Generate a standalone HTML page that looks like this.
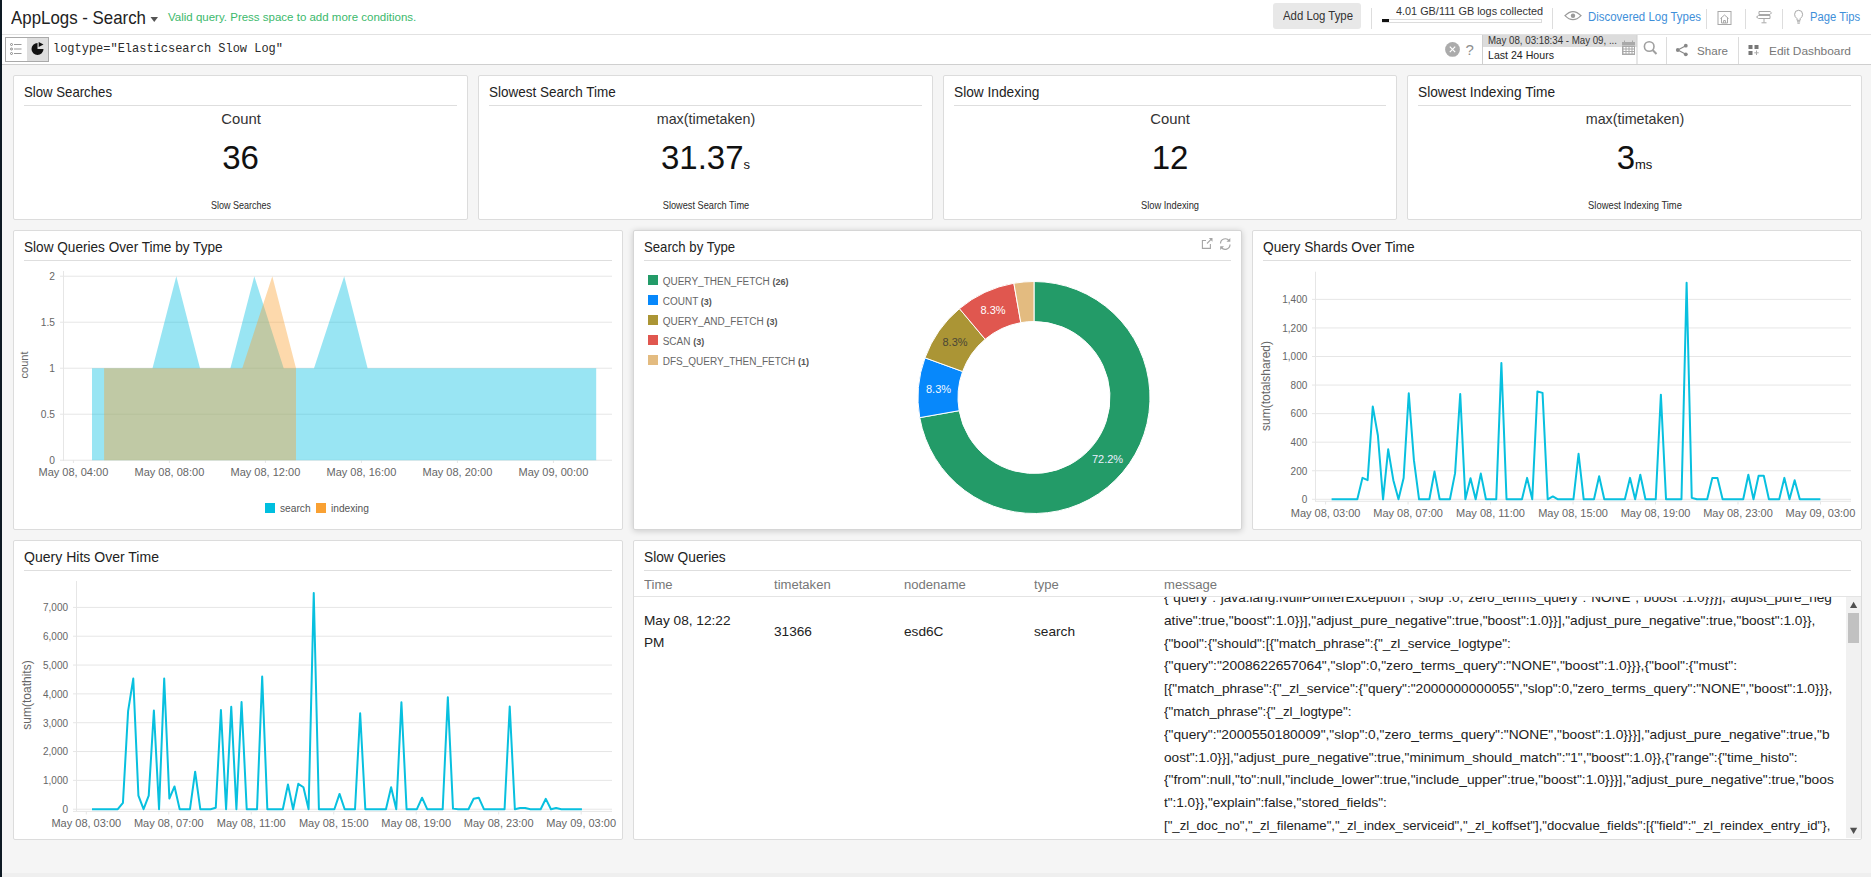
<!DOCTYPE html>
<html><head><meta charset="utf-8"><title>AppLogs - Search</title>
<style>
html,body{margin:0;padding:0;}
body{width:1871px;height:877px;overflow:hidden;background:#f5f5f5;position:relative;font-family:"Liberation Sans",sans-serif;}
.t{position:absolute;white-space:nowrap;}
.b{position:absolute;box-sizing:border-box;}
svg{position:absolute;left:0;top:0;}
</style></head><body>

<div class="b" style="left:0px;top:0px;width:1871px;height:35px;background:#fff;border-bottom:1px solid #e2e2e2;"></div>
<div class="b" style="left:0px;top:35px;width:1871px;height:30px;background:#fff;border-bottom:1px solid #cfcfcf;"></div>
<div class="b" style="left:0px;top:0px;width:2px;height:877px;background:#0e1a24;"></div>
<div class="b" style="left:2px;top:873px;width:1869px;height:4px;background:#efefef;"></div>
<div class="t sc" style="left:11.00px;top:8.59px;font-size:18.2px;line-height:18.2px;color:#222;font-weight:400;transform-origin:0 0;transform:scaleX(0.9272);">AppLogs - Search</div>
<svg width="1871" height="65" style="pointer-events:none"><path d="M150.5 17 L158 17 L154.25 22 Z" fill="#555"/></svg>
<div class="t sc" style="left:168.00px;top:12.27px;font-size:11.5px;line-height:11.5px;color:#3cb96c;font-weight:400;transform-origin:0 0;">Valid query. Press space to add more conditions.</div>
<div class="b" style="left:1273px;top:3px;width:88px;height:26px;background:#e8e8e8;border-radius:3px;"></div>
<div class="t sc" style="left:1283.00px;top:10.53px;font-size:11.9px;line-height:11.9px;color:#333;font-weight:400;transform-origin:0 0;transform:scaleX(0.9567);">Add Log Type</div>
<div class="b" style="left:1371px;top:8px;width:1px;height:21px;background:#ddd;"></div>
<div class="t sc" style="left:1396.00px;top:6.03px;font-size:11.3px;line-height:11.3px;color:#333;font-weight:400;transform-origin:0 0;transform:scaleX(0.9620);">4.01 GB/111 GB logs collected</div>
<div class="b" style="left:1382px;top:19px;width:160px;height:4px;border:1px solid #dcdcdc;background:#fff;"></div>
<div class="b" style="left:1382px;top:19px;width:7px;height:3px;background:#111;"></div>
<div class="b" style="left:1552px;top:8px;width:1px;height:21px;background:#ddd;"></div>
<div class="t sc" style="left:1588.30px;top:10.89px;font-size:12.3px;line-height:12.3px;color:#3f8fd9;font-weight:400;transform-origin:0 0;transform:scaleX(0.9304);">Discovered Log Types</div>
<div class="b" style="left:1706px;top:9px;width:1px;height:20px;background:#ddd;"></div>
<div class="b" style="left:1745px;top:9px;width:1px;height:20px;background:#ddd;"></div>
<div class="b" style="left:1782px;top:9px;width:1px;height:20px;background:#ddd;"></div>
<div class="t sc" style="left:1809.70px;top:10.89px;font-size:12.3px;line-height:12.3px;color:#3f8fd9;font-weight:400;transform-origin:0 0;transform:scaleX(0.9143);">Page Tips</div>
<svg width="1871" height="65" style="pointer-events:none">
<g fill="none" stroke="#9a9a9a" stroke-width="1.3">
  <path d="M1565 15.6 Q1573 7.5 1581 15.6 Q1573 23.7 1565 15.6 Z"/>
</g>
<circle cx="1573" cy="15.8" r="2.2" fill="#9a9a9a"/>
<g fill="none" stroke="#a8a8a8" stroke-width="1">
  <rect x="1718" y="11.5" width="13" height="13"/>
  <path d="M1720.5 18.5 L1724.5 15 L1728.5 18.5 M1721.5 17.8 V23 H1727.5 V17.8 M1723.6 23 V20.5 H1725.4 V23"/>
  <path d="M1759 11.5 H1770 L1771.5 12.8 L1770 14.5 H1759 Z M1770 15.5 H1758.5 L1756.5 17 L1758.5 18.5 H1770 Z M1764 18.5 V22.5 M1761.5 22.8 H1766.5"/>
  <path d="M1797 20.3 V18.6 Q1794.6 17 1794.6 14.3 A4 4 0 0 1 1802.6 14.3 Q1802.6 17 1800.2 18.6 V20.3 Z" />
  <path d="M1797 21.8 H1800.2 M1797.4 23.2 H1799.8" />
</g>
<!-- row 2 -->
<rect x="5.5" y="37.5" width="43" height="24" fill="#fff" stroke="#a9a9a9" stroke-width="1"/>
<rect x="27" y="38" width="21" height="23" fill="#dedede"/>
<g stroke="#888" stroke-width="1" fill="none">
  <circle cx="11.5" cy="44.5" r="1"/><circle cx="11.5" cy="49" r="1"/><circle cx="11.5" cy="53.5" r="1"/>
</g>
<g stroke="#999" stroke-width="1.2"><path d="M14 44.5 H21.5 M14 49 H21.5 M14 53.5 H21.5"/></g>
<path d="M37.5 43 A6 6 0 1 0 43.5 49 H37.5 Z" fill="#111"/>
<path d="M38.7 42 L43.5 44.5 L38.7 47 Z" fill="#111"/>
<circle cx="1452.5" cy="49.4" r="7.4" fill="#ababab"/>
<path d="M1449.8 46.7 L1455.2 52.1 M1455.2 46.7 L1449.8 52.1" stroke="#fff" stroke-width="1.2"/>
<rect x="1482" y="35" width="155" height="12" fill="#dcdcdc"/>
<rect x="1482" y="35" width="1" height="29" fill="#cfcfcf"/>
<rect x="1636.5" y="35" width="1" height="29" fill="#cfcfcf"/>
<g fill="#a9a9a9">
  <rect x="1622" y="42" width="13" height="3"/>
  <rect x="1624" y="40.5" width="1" height="2"/><rect x="1632" y="40.5" width="1" height="2"/>
  <rect x="1622" y="45.5" width="13" height="9.5"/>
</g>
<g fill="#fff">
  <rect x="1623.5" y="47" width="2" height="1.5"/><rect x="1626.5" y="47" width="2" height="1.5"/><rect x="1629.5" y="47" width="2" height="1.5"/><rect x="1632.5" y="47" width="1.5" height="1.5"/>
  <rect x="1623.5" y="49.5" width="2" height="1.5"/><rect x="1626.5" y="49.5" width="2" height="1.5"/><rect x="1629.5" y="49.5" width="2" height="1.5"/><rect x="1632.5" y="49.5" width="1.5" height="1.5"/>
  <rect x="1623.5" y="52" width="2" height="1.5"/><rect x="1626.5" y="52" width="2" height="1.5"/><rect x="1629.5" y="52" width="2" height="1.5"/><rect x="1632.5" y="52" width="1.5" height="1.5"/>
</g>
<circle cx="1649.2" cy="46.5" r="4.8" fill="none" stroke="#a0a0a0" stroke-width="1.6"/>
<path d="M1652.6 50 L1656.5 54" stroke="#a0a0a0" stroke-width="2"/>
<rect x="1666" y="37" width="1" height="27" fill="#dcdcdc"/>
<rect x="1738" y="37" width="1" height="27" fill="#dcdcdc"/>
<g fill="#888"><circle cx="1677.8" cy="50" r="1.9"/><circle cx="1685.8" cy="45.7" r="1.9"/><circle cx="1685.8" cy="54.3" r="1.9"/></g>
<path d="M1677.8 50 L1685.8 45.7 M1677.8 50 L1685.8 54.3" stroke="#888" stroke-width="1.2"/>
<g fill="#777"><rect x="1748.5" y="45" width="4" height="4"/><rect x="1754.5" y="45" width="4" height="4"/><rect x="1748.5" y="51" width="4" height="4"/></g>
<path d="M1756.5 50.5 V55 M1754.3 52.8 H1758.7" stroke="#aaa" stroke-width="1"/>
</svg>
<div class="t sc" style="left:52.50px;top:42.58px;font-size:12.9px;line-height:12.9px;color:#2a2a2a;font-weight:400;transform-origin:0 0;transform:scaleX(0.9291);font-family:'Liberation Mono',monospace;">logtype="Elasticsearch Slow Log"</div>
<div class="t sc" style="left:1465.50px;top:41.80px;font-size:15px;line-height:15px;color:#8e8e8e;font-weight:400;transform-origin:0 0;">?</div>
<div class="t sc" style="left:1488.10px;top:36.44px;font-size:10px;line-height:10px;color:#333;font-weight:400;transform-origin:0 0;transform:scaleX(0.9710);">May 08, 03:18:34 - May 09, ...</div>
<div class="t sc" style="left:1488.10px;top:49.60px;font-size:11.1px;line-height:11.1px;color:#222;font-weight:400;transform-origin:0 0;transform:scaleX(0.9554);">Last 24 Hours</div>
<div class="t sc" style="left:1697.00px;top:45.20px;font-size:11.7px;line-height:11.7px;color:#777;font-weight:400;transform-origin:0 0;transform:scaleX(0.9935);">Share</div>
<div class="t sc" style="left:1769.00px;top:45.20px;font-size:11.7px;line-height:11.7px;color:#777;font-weight:400;transform-origin:0 0;transform:scaleX(1.0176);">Edit Dashboard</div>
<div class="b" style="left:13px;top:75px;width:455px;height:145px;background:#fff;border:1px solid #dcdcdc;border-radius:2px;"></div>
<div class="t sc" style="left:24.00px;top:85.01px;font-size:14.4px;line-height:14.4px;color:#222;font-weight:400;transform-origin:0 0;transform:scaleX(0.9167);">Slow Searches</div>
<div class="b" style="left:24px;top:105px;width:433px;height:1px;background:#dedede;"></div>
<div class="t sc" style="left:240.50px;top:112.08px;font-size:14.2px;line-height:14.2px;color:#333;font-weight:400;transform-origin:0 0;transform:scaleX(1.0460) translateX(-50%);">Count</div>
<div class="t sc" style="left:240.50px;top:141.07px;font-size:33px;line-height:33px;color:#111;font-weight:400;transform-origin:0 0;transform:translateX(-50%);">36</div>
<div class="t sc" style="left:240.50px;top:201.38px;font-size:10.3px;line-height:10.3px;color:#2a2a2a;font-weight:400;transform-origin:0 0;transform:scaleX(0.8735) translateX(-50%);">Slow Searches</div>
<div class="b" style="left:478px;top:75px;width:455px;height:145px;background:#fff;border:1px solid #dcdcdc;border-radius:2px;"></div>
<div class="t sc" style="left:489.00px;top:85.01px;font-size:14.4px;line-height:14.4px;color:#222;font-weight:400;transform-origin:0 0;transform:scaleX(0.9373);">Slowest Search Time</div>
<div class="b" style="left:489px;top:105px;width:433px;height:1px;background:#dedede;"></div>
<div class="t sc" style="left:705.50px;top:112.08px;font-size:14.2px;line-height:14.2px;color:#333;font-weight:400;transform-origin:0 0;transform:scaleX(1.0075) translateX(-50%);">max(timetaken)</div>
<div class="t" style="left:705.50px;top:141.07px;font-size:33px;line-height:33px;color:#111;transform:translateX(-50%);">31.37<span style="font-size:13px;">s</span></div>
<div class="t sc" style="left:705.50px;top:201.38px;font-size:10.3px;line-height:10.3px;color:#2a2a2a;font-weight:400;transform-origin:0 0;transform:scaleX(0.8933) translateX(-50%);">Slowest Search Time</div>
<div class="b" style="left:943px;top:75px;width:454px;height:145px;background:#fff;border:1px solid #dcdcdc;border-radius:2px;"></div>
<div class="t sc" style="left:954.00px;top:85.01px;font-size:14.4px;line-height:14.4px;color:#222;font-weight:400;transform-origin:0 0;transform:scaleX(0.9530);">Slow Indexing</div>
<div class="b" style="left:954px;top:105px;width:432px;height:1px;background:#dedede;"></div>
<div class="t sc" style="left:1170.00px;top:112.08px;font-size:14.2px;line-height:14.2px;color:#333;font-weight:400;transform-origin:0 0;transform:scaleX(1.0460) translateX(-50%);">Count</div>
<div class="t sc" style="left:1170.00px;top:141.07px;font-size:33px;line-height:33px;color:#111;font-weight:400;transform-origin:0 0;transform:translateX(-50%);">12</div>
<div class="t sc" style="left:1170.00px;top:201.38px;font-size:10.3px;line-height:10.3px;color:#2a2a2a;font-weight:400;transform-origin:0 0;transform:scaleX(0.9047) translateX(-50%);">Slow Indexing</div>
<div class="b" style="left:1407px;top:75px;width:455px;height:145px;background:#fff;border:1px solid #dcdcdc;border-radius:2px;"></div>
<div class="t sc" style="left:1418.00px;top:85.01px;font-size:14.4px;line-height:14.4px;color:#222;font-weight:400;transform-origin:0 0;transform:scaleX(0.9522);">Slowest Indexing Time</div>
<div class="b" style="left:1418px;top:105px;width:433px;height:1px;background:#dedede;"></div>
<div class="t sc" style="left:1634.50px;top:112.08px;font-size:14.2px;line-height:14.2px;color:#333;font-weight:400;transform-origin:0 0;transform:scaleX(1.0075) translateX(-50%);">max(timetaken)</div>
<div class="t" style="left:1634.50px;top:141.07px;font-size:33px;line-height:33px;color:#111;transform:translateX(-50%);">3<span style="font-size:13px;">ms</span></div>
<div class="t sc" style="left:1634.50px;top:201.38px;font-size:10.3px;line-height:10.3px;color:#2a2a2a;font-weight:400;transform-origin:0 0;transform:scaleX(0.9104) translateX(-50%);">Slowest Indexing Time</div>
<div class="b" style="left:13px;top:230px;width:610px;height:300px;background:#fff;border:1px solid #dcdcdc;border-radius:2px;"></div>
<div class="b" style="left:633px;top:230px;width:609px;height:300px;background:#fff;border:1px solid #d6d6d6;border-radius:2px;box-shadow:0 1px 6px rgba(0,0,0,0.18);"></div>
<div class="b" style="left:1252px;top:230px;width:610px;height:300px;background:#fff;border:1px solid #dcdcdc;border-radius:2px;"></div>
<div class="b" style="left:13px;top:540px;width:610px;height:300px;background:#fff;border:1px solid #dcdcdc;border-radius:2px;"></div>
<div class="b" style="left:633px;top:540px;width:1229px;height:300px;background:#fff;border:1px solid #dcdcdc;border-radius:2px;"></div>
<div class="t sc" style="left:24.00px;top:240.01px;font-size:14.4px;line-height:14.4px;color:#222;font-weight:400;transform-origin:0 0;transform:scaleX(0.9454);">Slow Queries Over Time by Type</div>
<div class="b" style="left:24px;top:260px;width:588px;height:1px;background:#dedede;"></div>
<div class="t sc" style="left:644.00px;top:239.81px;font-size:14.4px;line-height:14.4px;color:#222;font-weight:400;transform-origin:0 0;transform:scaleX(0.9144);">Search by Type</div>
<div class="b" style="left:644px;top:260px;width:587px;height:1px;background:#dedede;"></div>
<div class="t sc" style="left:1263.00px;top:239.81px;font-size:14.4px;line-height:14.4px;color:#222;font-weight:400;transform-origin:0 0;transform:scaleX(0.9525);">Query Shards Over Time</div>
<div class="b" style="left:1263px;top:260px;width:588px;height:1px;background:#dedede;"></div>
<div class="t sc" style="left:24.00px;top:549.61px;font-size:14.4px;line-height:14.4px;color:#222;font-weight:400;transform-origin:0 0;transform:scaleX(0.9758);">Query Hits Over Time</div>
<div class="b" style="left:24px;top:570px;width:588px;height:1px;background:#dedede;"></div>
<div class="t sc" style="left:644.00px;top:550.11px;font-size:14.4px;line-height:14.4px;color:#222;font-weight:400;transform-origin:0 0;transform:scaleX(0.9547);">Slow Queries</div>
<div class="b" style="left:644px;top:570px;width:1207px;height:1px;background:#dedede;"></div>
<svg width="1871" height="877" style="pointer-events:none">
<rect x="60" y="275.70" width="552" height="1" fill="#e6e6e6"/>
<text x="0.00" y="0.00" font-family="Liberation Sans" font-size="11" fill="#666" text-anchor="end" font-weight="400" transform="translate(55,280.00) scale(0.93,1)">2</text>
<rect x="60" y="321.70" width="552" height="1" fill="#e6e6e6"/>
<text x="0.00" y="0.00" font-family="Liberation Sans" font-size="11" fill="#666" text-anchor="end" font-weight="400" transform="translate(55,326.00) scale(0.93,1)">1.5</text>
<rect x="60" y="367.70" width="552" height="1" fill="#e6e6e6"/>
<text x="0.00" y="0.00" font-family="Liberation Sans" font-size="11" fill="#666" text-anchor="end" font-weight="400" transform="translate(55,372.00) scale(0.93,1)">1</text>
<rect x="60" y="413.70" width="552" height="1" fill="#e6e6e6"/>
<text x="0.00" y="0.00" font-family="Liberation Sans" font-size="11" fill="#666" text-anchor="end" font-weight="400" transform="translate(55,418.00) scale(0.93,1)">0.5</text>
<rect x="60" y="459.70" width="552" height="1" fill="#e6e6e6"/>
<text x="0.00" y="0.00" font-family="Liberation Sans" font-size="11" fill="#666" text-anchor="end" font-weight="400" transform="translate(55,464.00) scale(0.93,1)">0</text>
<rect x="63" y="271" width="1" height="190" fill="#e6e6e6"/>
<rect x="72.90" y="460" width="1" height="3" fill="#e6e6e6"/>
<text x="73.40" y="476.00" font-family="Liberation Sans" font-size="11" fill="#666" text-anchor="middle" font-weight="400" >May 08, 04:00</text>
<rect x="168.90" y="460" width="1" height="3" fill="#e6e6e6"/>
<text x="169.40" y="476.00" font-family="Liberation Sans" font-size="11" fill="#666" text-anchor="middle" font-weight="400" >May 08, 08:00</text>
<rect x="264.90" y="460" width="1" height="3" fill="#e6e6e6"/>
<text x="265.40" y="476.00" font-family="Liberation Sans" font-size="11" fill="#666" text-anchor="middle" font-weight="400" >May 08, 12:00</text>
<rect x="360.90" y="460" width="1" height="3" fill="#e6e6e6"/>
<text x="361.40" y="476.00" font-family="Liberation Sans" font-size="11" fill="#666" text-anchor="middle" font-weight="400" >May 08, 16:00</text>
<rect x="456.90" y="460" width="1" height="3" fill="#e6e6e6"/>
<text x="457.40" y="476.00" font-family="Liberation Sans" font-size="11" fill="#666" text-anchor="middle" font-weight="400" >May 08, 20:00</text>
<rect x="552.90" y="460" width="1" height="3" fill="#e6e6e6"/>
<text x="553.40" y="476.00" font-family="Liberation Sans" font-size="11" fill="#666" text-anchor="middle" font-weight="400" >May 09, 00:00</text>
<text x="0.00" y="0.00" font-family="Liberation Sans" font-size="11" fill="#666" text-anchor="middle" font-weight="400" transform="translate(27.5,365) rotate(-90)">count</text>
<polygon points="92.0,460.2 92.0,368.2 152.5,368.2 176.3,276.2 200.0,368.2 230.4,368.2 254.3,276.2 283.7,368.2 314.0,368.2 344.2,276.2 367.6,368.2 596.2,368.2 596.2,460.2" fill="rgb(0,190,224)" fill-opacity="0.4"/>
<polygon points="104.1,460.2 104.1,368.2 242.3,368.2 272.3,276.2 296.0,368.2 296.0,460.2" fill="rgb(249,160,48)" fill-opacity="0.4"/>
<rect x="265" y="503" width="10" height="10" fill="#00bfdf"/>
<text x="280.00" y="511.50" font-family="Liberation Sans" font-size="10.2" fill="#555" text-anchor="start" font-weight="400" >search</text>
<rect x="316" y="503" width="10" height="10" fill="#f9a133"/>
<text x="331.00" y="511.50" font-family="Liberation Sans" font-size="10.2" fill="#555" text-anchor="start" font-weight="400" >indexing</text>
<path d="M1034.00,281.50 A116,116 0 1 1 919.76,417.64 L959.15,410.70 A76,76 0 1 0 1034.00,321.50 Z" fill="#239b68" stroke="#fff" stroke-width="1" stroke-linejoin="round"/>
<path d="M919.76,417.64 A116,116 0 0 1 925.00,357.83 L962.58,371.51 A76,76 0 0 0 959.15,410.70 Z" fill="#0788fb" stroke="#fff" stroke-width="1" stroke-linejoin="round"/>
<path d="M925.00,357.83 A116,116 0 0 1 959.44,308.64 L985.15,339.28 A76,76 0 0 0 962.58,371.51 Z" fill="#ab9535" stroke="#fff" stroke-width="1" stroke-linejoin="round"/>
<path d="M959.44,308.64 A116,116 0 0 1 1013.86,283.26 L1020.80,322.65 A76,76 0 0 0 985.15,339.28 Z" fill="#e0574f" stroke="#fff" stroke-width="1" stroke-linejoin="round"/>
<path d="M1013.86,283.26 A116,116 0 0 1 1034.00,281.50 L1034.00,321.50 A76,76 0 0 0 1020.80,322.65 Z" fill="#e3bb80" stroke="#fff" stroke-width="1" stroke-linejoin="round"/>
<text x="1107.50" y="463.30" font-family="Liberation Sans" font-size="11" fill="#eef" text-anchor="middle" font-weight="400" >72.2%</text>
<text x="938.50" y="393.30" font-family="Liberation Sans" font-size="11" fill="#f4f8ff" text-anchor="middle" font-weight="400" >8.3%</text>
<text x="955.00" y="346.20" font-family="Liberation Sans" font-size="11" fill="#4a4636" text-anchor="middle" font-weight="400" >8.3%</text>
<text x="993.00" y="314.20" font-family="Liberation Sans" font-size="11" fill="#fff" text-anchor="middle" font-weight="400" >8.3%</text>
<rect x="648" y="275" width="10" height="10" fill="#239b68"/>
<text x="662.7" y="285" font-family="Liberation Sans" font-size="10" fill="#666">QUERY_THEN_FETCH <tspan font-size="9" font-weight="700" fill="#555">(26)</tspan></text>
<rect x="648" y="295" width="10" height="10" fill="#0788fb"/>
<text x="662.7" y="305" font-family="Liberation Sans" font-size="10" fill="#666">COUNT <tspan font-size="9" font-weight="700" fill="#555">(3)</tspan></text>
<rect x="648" y="315" width="10" height="10" fill="#ab9535"/>
<text x="662.7" y="325" font-family="Liberation Sans" font-size="10" fill="#666">QUERY_AND_FETCH <tspan font-size="9" font-weight="700" fill="#555">(3)</tspan></text>
<rect x="648" y="335" width="10" height="10" fill="#e0574f"/>
<text x="662.7" y="345" font-family="Liberation Sans" font-size="10" fill="#666">SCAN <tspan font-size="9" font-weight="700" fill="#555">(3)</tspan></text>
<rect x="648" y="355" width="10" height="10" fill="#e3bb80"/>
<text x="662.7" y="365" font-family="Liberation Sans" font-size="10" fill="#666">DFS_QUERY_THEN_FETCH <tspan font-size="9" font-weight="700" fill="#555">(1)</tspan></text>
<g fill="none" stroke="#a5a5a5" stroke-width="1.1">
<path d="M1206 240.5 H1202.4 V248.4 H1210.4 V244"/>
<path d="M1207 243.5 L1211.8 238.7"/>
</g>
<path d="M1208.8 238 H1212.5 V241.7 Z" fill="#a5a5a5"/>
<g fill="none" stroke="#a5a5a5" stroke-width="1.2">
<path d="M1220.5 243.5 A4.8 4.8 0 0 1 1229.2 240.8"/>
<path d="M1230 244.5 A4.8 4.8 0 0 1 1221.3 247.3"/>
</g>
<path d="M1230.3 238 V241.8 H1226.5 Z" fill="#a5a5a5"/>
<path d="M1220.2 250 V246.2 H1224 Z" fill="#a5a5a5"/>
<rect x="1312" y="498.80" width="539" height="1" fill="#e6e6e6"/>
<text x="0.00" y="0.00" font-family="Liberation Sans" font-size="11" fill="#666" text-anchor="end" font-weight="400" transform="translate(1307.3,503.10) scale(0.91,1)">0</text>
<rect x="1312" y="470.24" width="539" height="1" fill="#e6e6e6"/>
<text x="0.00" y="0.00" font-family="Liberation Sans" font-size="11" fill="#666" text-anchor="end" font-weight="400" transform="translate(1307.3,474.54) scale(0.91,1)">200</text>
<rect x="1312" y="441.68" width="539" height="1" fill="#e6e6e6"/>
<text x="0.00" y="0.00" font-family="Liberation Sans" font-size="11" fill="#666" text-anchor="end" font-weight="400" transform="translate(1307.3,445.98) scale(0.91,1)">400</text>
<rect x="1312" y="413.12" width="539" height="1" fill="#e6e6e6"/>
<text x="0.00" y="0.00" font-family="Liberation Sans" font-size="11" fill="#666" text-anchor="end" font-weight="400" transform="translate(1307.3,417.42) scale(0.91,1)">600</text>
<rect x="1312" y="384.56" width="539" height="1" fill="#e6e6e6"/>
<text x="0.00" y="0.00" font-family="Liberation Sans" font-size="11" fill="#666" text-anchor="end" font-weight="400" transform="translate(1307.3,388.86) scale(0.91,1)">800</text>
<rect x="1312" y="356.00" width="539" height="1" fill="#e6e6e6"/>
<text x="0.00" y="0.00" font-family="Liberation Sans" font-size="11" fill="#666" text-anchor="end" font-weight="400" transform="translate(1307.3,360.30) scale(0.91,1)">1,000</text>
<rect x="1312" y="327.44" width="539" height="1" fill="#e6e6e6"/>
<text x="0.00" y="0.00" font-family="Liberation Sans" font-size="11" fill="#666" text-anchor="end" font-weight="400" transform="translate(1307.3,331.74) scale(0.91,1)">1,200</text>
<rect x="1312" y="298.88" width="539" height="1" fill="#e6e6e6"/>
<text x="0.00" y="0.00" font-family="Liberation Sans" font-size="11" fill="#666" text-anchor="end" font-weight="400" transform="translate(1307.3,303.18) scale(0.91,1)">1,400</text>
<rect x="1315" y="271.7" width="1" height="230" fill="#e6e6e6"/>
<rect x="1315" y="500.8" width="536" height="1" fill="#e6e6e6"/>
<rect x="1325.10" y="501.5" width="1" height="3" fill="#e6e6e6"/>
<text x="1325.60" y="517.20" font-family="Liberation Sans" font-size="11" fill="#666" text-anchor="middle" font-weight="400" >May 08, 03:00</text>
<rect x="1407.58" y="501.5" width="1" height="3" fill="#e6e6e6"/>
<text x="1408.08" y="517.20" font-family="Liberation Sans" font-size="11" fill="#666" text-anchor="middle" font-weight="400" >May 08, 07:00</text>
<rect x="1490.06" y="501.5" width="1" height="3" fill="#e6e6e6"/>
<text x="1490.56" y="517.20" font-family="Liberation Sans" font-size="11" fill="#666" text-anchor="middle" font-weight="400" >May 08, 11:00</text>
<rect x="1572.54" y="501.5" width="1" height="3" fill="#e6e6e6"/>
<text x="1573.04" y="517.20" font-family="Liberation Sans" font-size="11" fill="#666" text-anchor="middle" font-weight="400" >May 08, 15:00</text>
<rect x="1655.02" y="501.5" width="1" height="3" fill="#e6e6e6"/>
<text x="1655.52" y="517.20" font-family="Liberation Sans" font-size="11" fill="#666" text-anchor="middle" font-weight="400" >May 08, 19:00</text>
<rect x="1737.50" y="501.5" width="1" height="3" fill="#e6e6e6"/>
<text x="1738.00" y="517.20" font-family="Liberation Sans" font-size="11" fill="#666" text-anchor="middle" font-weight="400" >May 08, 23:00</text>
<rect x="1819.98" y="501.5" width="1" height="3" fill="#e6e6e6"/>
<text x="1820.48" y="517.20" font-family="Liberation Sans" font-size="11" fill="#666" text-anchor="middle" font-weight="400" >May 09, 03:00</text>
<text x="0.00" y="0.00" font-family="Liberation Sans" font-size="12" fill="#666" text-anchor="middle" font-weight="400" transform="translate(1269.5,386) rotate(-90)">sum(totalshared)</text>
<polyline points="1331.60,499.30 1336.74,499.30 1341.89,499.30 1347.03,499.30 1352.18,499.30 1357.32,499.30 1362.47,477.88 1367.62,480.16 1372.76,406.48 1377.90,435.47 1383.05,499.30 1388.19,449.32 1393.34,480.16 1398.48,499.30 1403.63,478.02 1408.77,393.34 1413.92,460.17 1419.06,499.30 1424.21,499.30 1429.36,499.30 1434.50,471.60 1439.64,499.30 1444.79,499.30 1449.93,499.30 1455.08,473.17 1460.22,394.06 1465.37,499.30 1470.51,478.31 1475.66,499.30 1480.80,473.60 1485.95,499.30 1491.09,499.30 1496.24,499.30 1501.38,362.93 1506.53,499.30 1511.67,499.30 1516.82,499.30 1521.96,499.30 1527.11,477.88 1532.25,499.30 1537.40,391.49 1542.54,392.91 1547.69,499.30 1552.83,496.44 1557.98,499.30 1563.12,499.30 1568.27,499.30 1573.41,499.30 1578.56,453.75 1583.70,499.30 1588.85,499.30 1593.99,499.30 1599.14,476.17 1604.28,499.30 1609.43,499.30 1614.57,499.30 1619.72,499.30 1624.86,499.30 1630.01,477.88 1635.15,499.30 1640.30,474.74 1645.44,499.30 1650.59,499.30 1655.73,499.30 1660.88,394.63 1666.02,499.30 1671.17,499.30 1676.31,499.30 1681.46,499.30 1686.61,282.67 1691.75,497.87 1696.89,499.30 1702.04,499.30 1707.18,499.30 1712.33,477.88 1717.47,477.88 1722.62,499.30 1727.76,499.30 1732.91,499.30 1738.05,499.30 1743.20,499.30 1748.34,474.74 1753.49,499.30 1758.63,475.74 1763.78,475.74 1768.92,499.30 1774.07,499.30 1779.21,499.30 1784.36,477.88 1789.50,499.30 1794.65,480.16 1799.79,499.30 1804.94,499.30 1810.08,499.30 1815.23,499.30 1820.38,499.30" fill="none" stroke="#08c0df" stroke-width="2" stroke-linejoin="round"/>
<rect x="73" y="808.70" width="539" height="1" fill="#e6e6e6"/>
<text x="0.00" y="0.00" font-family="Liberation Sans" font-size="11" fill="#666" text-anchor="end" font-weight="400" transform="translate(68,813.00) scale(0.91,1)">0</text>
<rect x="73" y="779.87" width="539" height="1" fill="#e6e6e6"/>
<text x="0.00" y="0.00" font-family="Liberation Sans" font-size="11" fill="#666" text-anchor="end" font-weight="400" transform="translate(68,784.17) scale(0.91,1)">1,000</text>
<rect x="73" y="751.04" width="539" height="1" fill="#e6e6e6"/>
<text x="0.00" y="0.00" font-family="Liberation Sans" font-size="11" fill="#666" text-anchor="end" font-weight="400" transform="translate(68,755.34) scale(0.91,1)">2,000</text>
<rect x="73" y="722.21" width="539" height="1" fill="#e6e6e6"/>
<text x="0.00" y="0.00" font-family="Liberation Sans" font-size="11" fill="#666" text-anchor="end" font-weight="400" transform="translate(68,726.51) scale(0.91,1)">3,000</text>
<rect x="73" y="693.38" width="539" height="1" fill="#e6e6e6"/>
<text x="0.00" y="0.00" font-family="Liberation Sans" font-size="11" fill="#666" text-anchor="end" font-weight="400" transform="translate(68,697.68) scale(0.91,1)">4,000</text>
<rect x="73" y="664.55" width="539" height="1" fill="#e6e6e6"/>
<text x="0.00" y="0.00" font-family="Liberation Sans" font-size="11" fill="#666" text-anchor="end" font-weight="400" transform="translate(68,668.85) scale(0.91,1)">5,000</text>
<rect x="73" y="635.72" width="539" height="1" fill="#e6e6e6"/>
<text x="0.00" y="0.00" font-family="Liberation Sans" font-size="11" fill="#666" text-anchor="end" font-weight="400" transform="translate(68,640.02) scale(0.91,1)">6,000</text>
<rect x="73" y="606.89" width="539" height="1" fill="#e6e6e6"/>
<text x="0.00" y="0.00" font-family="Liberation Sans" font-size="11" fill="#666" text-anchor="end" font-weight="400" transform="translate(68,611.19) scale(0.91,1)">7,000</text>
<rect x="73" y="810.9" width="539" height="1" fill="#e6e6e6"/>
<rect x="76" y="581" width="1" height="230" fill="#e6e6e6"/>
<rect x="85.80" y="811.5" width="1" height="3" fill="#e6e6e6"/>
<text x="86.30" y="827.00" font-family="Liberation Sans" font-size="11" fill="#666" text-anchor="middle" font-weight="400" >May 08, 03:00</text>
<rect x="168.28" y="811.5" width="1" height="3" fill="#e6e6e6"/>
<text x="168.78" y="827.00" font-family="Liberation Sans" font-size="11" fill="#666" text-anchor="middle" font-weight="400" >May 08, 07:00</text>
<rect x="250.76" y="811.5" width="1" height="3" fill="#e6e6e6"/>
<text x="251.26" y="827.00" font-family="Liberation Sans" font-size="11" fill="#666" text-anchor="middle" font-weight="400" >May 08, 11:00</text>
<rect x="333.24" y="811.5" width="1" height="3" fill="#e6e6e6"/>
<text x="333.74" y="827.00" font-family="Liberation Sans" font-size="11" fill="#666" text-anchor="middle" font-weight="400" >May 08, 15:00</text>
<rect x="415.72" y="811.5" width="1" height="3" fill="#e6e6e6"/>
<text x="416.22" y="827.00" font-family="Liberation Sans" font-size="11" fill="#666" text-anchor="middle" font-weight="400" >May 08, 19:00</text>
<rect x="498.20" y="811.5" width="1" height="3" fill="#e6e6e6"/>
<text x="498.70" y="827.00" font-family="Liberation Sans" font-size="11" fill="#666" text-anchor="middle" font-weight="400" >May 08, 23:00</text>
<rect x="580.68" y="811.5" width="1" height="3" fill="#e6e6e6"/>
<text x="581.18" y="827.00" font-family="Liberation Sans" font-size="11" fill="#666" text-anchor="middle" font-weight="400" >May 09, 03:00</text>
<text x="0.00" y="0.00" font-family="Liberation Sans" font-size="12" fill="#666" text-anchor="middle" font-weight="400" transform="translate(31,695) rotate(-90)">sum(toathits)</text>
<polyline points="92.00,809.20 97.16,809.20 102.31,809.20 107.47,809.20 112.63,809.20 117.78,809.20 122.94,802.86 128.10,711.18 133.26,678.60 138.41,795.65 143.57,809.20 148.73,795.65 153.88,710.60 159.04,809.20 164.20,678.60 169.36,798.53 174.51,786.42 179.67,809.20 184.83,809.20 189.98,809.20 195.14,771.72 200.30,809.20 205.45,809.20 210.61,809.20 215.77,807.76 220.93,710.02 226.08,809.20 231.24,706.85 236.40,809.20 241.55,701.95 246.71,809.20 251.87,809.20 257.02,809.20 262.18,676.58 267.34,809.20 272.50,809.20 277.65,809.20 282.81,809.20 287.97,784.41 293.12,809.20 298.28,783.83 303.44,787.29 308.59,809.20 313.75,592.98 318.91,809.20 324.06,809.20 329.22,809.20 334.38,809.20 339.54,793.92 344.69,809.20 349.85,809.20 355.01,809.20 360.16,713.20 365.32,809.20 370.48,809.20 375.63,809.20 380.79,809.20 385.95,809.20 391.11,787.29 396.26,809.20 401.42,702.24 406.58,809.20 411.73,809.20 416.89,809.20 422.05,797.67 427.20,809.20 432.36,809.20 437.52,809.20 442.68,809.20 447.83,697.34 452.99,808.62 458.15,809.20 463.30,809.20 468.46,809.20 473.62,798.82 478.77,797.67 483.93,809.20 489.09,809.20 494.25,809.20 499.40,809.20 504.56,809.20 509.72,706.57 514.87,809.20 520.03,808.05 525.19,808.05 530.35,809.20 535.50,809.20 540.66,809.20 545.82,798.82 550.97,809.20 556.13,808.05 561.29,809.20 566.44,809.20 571.60,809.20 576.76,809.20 581.91,809.20" fill="none" stroke="#08c0df" stroke-width="2" stroke-linejoin="round"/>
</svg>
<div class="t sc" style="left:644.00px;top:578.94px;font-size:12px;line-height:12px;color:#777;font-weight:400;transform-origin:0 0;transform:scaleX(1.0900);">Time</div>
<div class="t sc" style="left:774.30px;top:578.94px;font-size:12px;line-height:12px;color:#777;font-weight:400;transform-origin:0 0;transform:scaleX(1.0900);">timetaken</div>
<div class="t sc" style="left:904.20px;top:578.94px;font-size:12px;line-height:12px;color:#777;font-weight:400;transform-origin:0 0;transform:scaleX(1.0900);">nodename</div>
<div class="t sc" style="left:1034.40px;top:578.94px;font-size:12px;line-height:12px;color:#777;font-weight:400;transform-origin:0 0;transform:scaleX(1.0900);">type</div>
<div class="t sc" style="left:1164.30px;top:578.94px;font-size:12px;line-height:12px;color:#777;font-weight:400;transform-origin:0 0;transform:scaleX(1.0900);">message</div>
<div class="b" style="left:634px;top:596px;width:1227px;height:1px;background:#e4e4e4;"></div>
<div class="t sc" style="left:644.00px;top:613.53px;font-size:13.2px;line-height:13.2px;color:#222;font-weight:400;transform-origin:0 0;transform:scaleX(1.0350);">May 08, 12:22</div>
<div class="t sc" style="left:644.00px;top:636.23px;font-size:13.2px;line-height:13.2px;color:#222;font-weight:400;transform-origin:0 0;transform:scaleX(1.0350);">PM</div>
<div class="t sc" style="left:774.30px;top:625.03px;font-size:13.2px;line-height:13.2px;color:#222;font-weight:400;transform-origin:0 0;transform:scaleX(1.0350);">31366</div>
<div class="t sc" style="left:904.20px;top:625.13px;font-size:13.2px;line-height:13.2px;color:#222;font-weight:400;transform-origin:0 0;transform:scaleX(1.0350);">esd6C</div>
<div class="t sc" style="left:1034.40px;top:625.33px;font-size:13.2px;line-height:13.2px;color:#222;font-weight:400;transform-origin:0 0;transform:scaleX(1.0350);">search</div>
<div class="b" style="left:1164px;top:597px;width:682px;height:241px;overflow:hidden;">
<div class="t ml" style="left:0;top:-6.00px;font-size:13px;line-height:13px;color:#222;transform-origin:0 0;transform:scaleX(1.0454);">{"query":"java.lang.NullPointerException","slop":0,"zero_terms_query":"NONE","boost":1.0}}}],"adjust_pure_neg</div>
<div class="t ml" style="left:0;top:16.80px;font-size:13px;line-height:13px;color:#222;transform-origin:0 0;transform:scaleX(1.0500);">ative":true,"boost":1.0}}],"adjust_pure_negative":true,"boost":1.0}}],"adjust_pure_negative":true,"boost":1.0}},</div>
<div class="t ml" style="left:0;top:39.60px;font-size:13px;line-height:13px;color:#222;transform-origin:0 0;transform:scaleX(1.0452);">{"bool":{"should":[{"match_phrase":{"_zl_service_logtype":</div>
<div class="t ml" style="left:0;top:62.40px;font-size:13px;line-height:13px;color:#222;transform-origin:0 0;transform:scaleX(1.0642);">{"query":"2008622657064","slop":0,"zero_terms_query":"NONE","boost":1.0}}},{"bool":{"must":</div>
<div class="t ml" style="left:0;top:85.20px;font-size:13px;line-height:13px;color:#222;transform-origin:0 0;transform:scaleX(1.0496);">[{"match_phrase":{"_zl_service":{"query":"2000000000055","slop":0,"zero_terms_query":"NONE","boost":1.0}}},</div>
<div class="t ml" style="left:0;top:108.00px;font-size:13px;line-height:13px;color:#222;transform-origin:0 0;transform:scaleX(1.0273);">{"match_phrase":{"_zl_logtype":</div>
<div class="t ml" style="left:0;top:130.80px;font-size:13px;line-height:13px;color:#222;transform-origin:0 0;transform:scaleX(1.0563);">{"query":"2000550180009","slop":0,"zero_terms_query":"NONE","boost":1.0}}}],"adjust_pure_negative":true,"b</div>
<div class="t ml" style="left:0;top:153.60px;font-size:13px;line-height:13px;color:#222;transform-origin:0 0;transform:scaleX(1.0462);">oost":1.0}}],"adjust_pure_negative":true,"minimum_should_match":"1","boost":1.0}},{"range":{"time_histo":</div>
<div class="t ml" style="left:0;top:176.40px;font-size:13px;line-height:13px;color:#222;transform-origin:0 0;transform:scaleX(1.0592);">{"from":null,"to":null,"include_lower":true,"include_upper":true,"boost":1.0}}}],"adjust_pure_negative":true,"boos</div>
<div class="t ml" style="left:0;top:199.20px;font-size:13px;line-height:13px;color:#222;transform-origin:0 0;transform:scaleX(1.0416);">t":1.0}},"explain":false,"stored_fields":</div>
<div class="t ml" style="left:0;top:222.00px;font-size:13px;line-height:13px;color:#222;transform-origin:0 0;transform:scaleX(1.0131);">["_zl_doc_no","_zl_filename","_zl_index_serviceid","_zl_koffset"],"docvalue_fields":[{"field":"_zl_reindex_entry_id"},</div>
</div>
<div class="b" style="left:1846px;top:597px;width:15px;height:241px;background:#f1f1f1;"></div>
<div class="b" style="left:1848px;top:613px;width:11px;height:30px;background:#c1c1c1;"></div>
<svg width="1871" height="877" style="pointer-events:none"><path d="M1850 608 L1857.2 608 L1853.6 601.8 Z" fill="#505050"/><path d="M1850 827.7 L1857.2 827.7 L1853.6 833.9 Z" fill="#505050"/></svg>
</body></html>
